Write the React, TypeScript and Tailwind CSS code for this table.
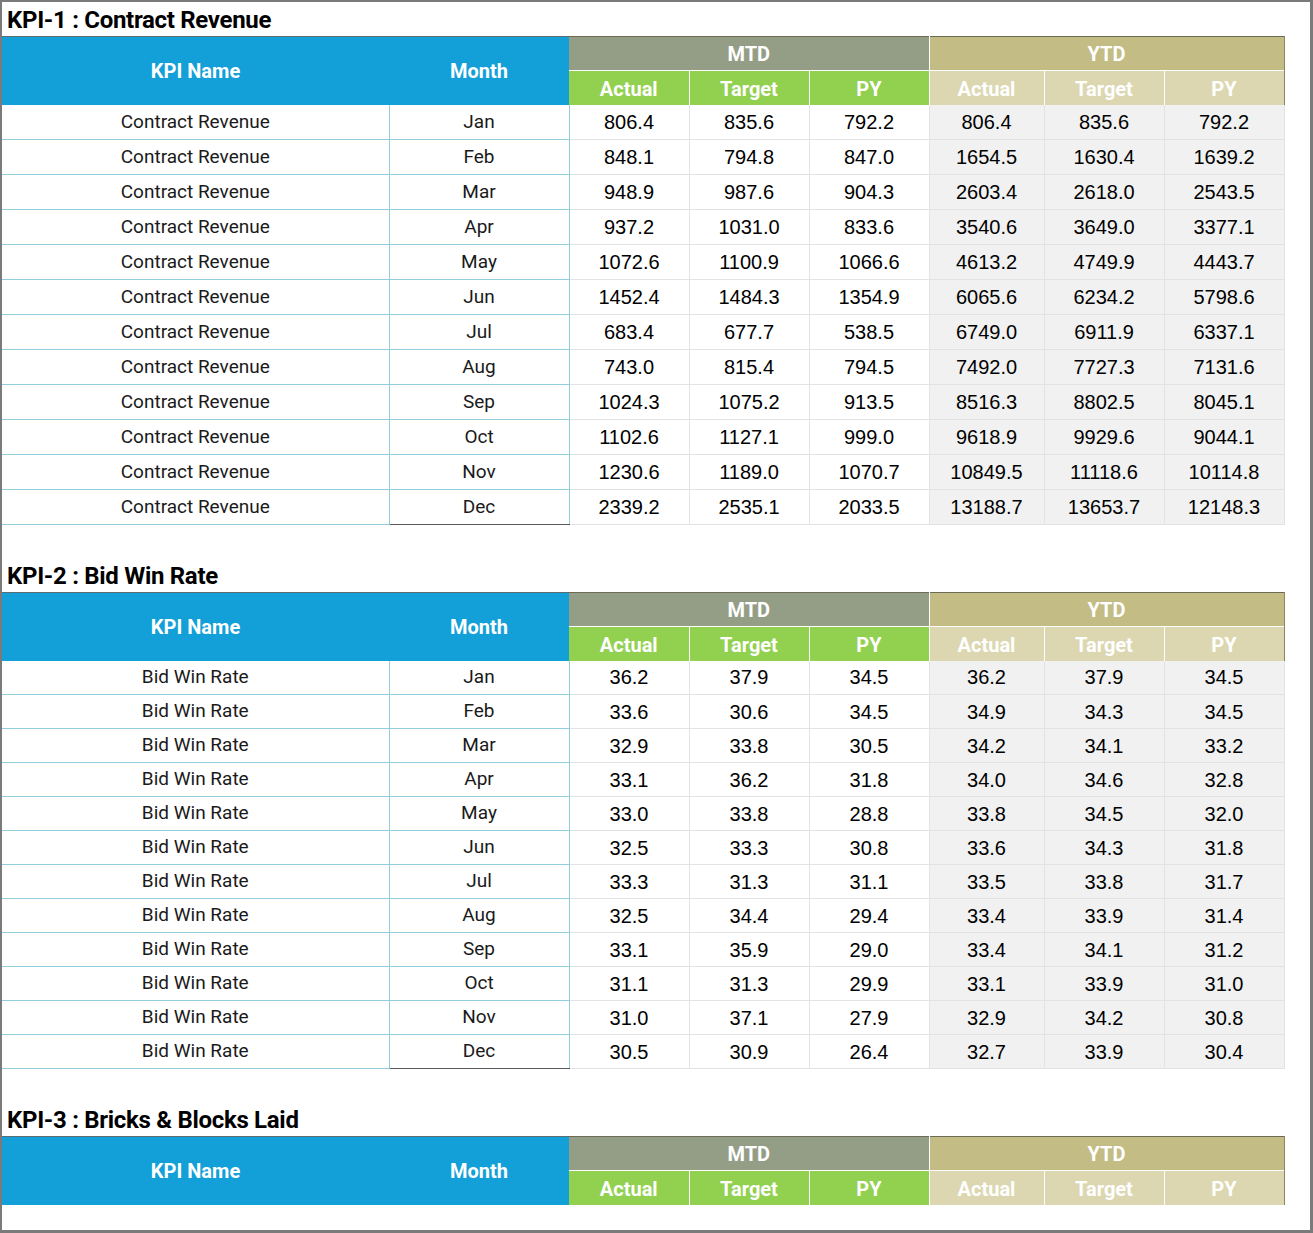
import React from "react";

type Row = [string, string, string, string, string, string, string];

const kpi1: Row[] = [
  ["Jan", "806.4", "835.6", "792.2", "806.4", "835.6", "792.2"],
  ["Feb", "848.1", "794.8", "847.0", "1654.5", "1630.4", "1639.2"],
  ["Mar", "948.9", "987.6", "904.3", "2603.4", "2618.0", "2543.5"],
  ["Apr", "937.2", "1031.0", "833.6", "3540.6", "3649.0", "3377.1"],
  ["May", "1072.6", "1100.9", "1066.6", "4613.2", "4749.9", "4443.7"],
  ["Jun", "1452.4", "1484.3", "1354.9", "6065.6", "6234.2", "5798.6"],
  ["Jul", "683.4", "677.7", "538.5", "6749.0", "6911.9", "6337.1"],
  ["Aug", "743.0", "815.4", "794.5", "7492.0", "7727.3", "7131.6"],
  ["Sep", "1024.3", "1075.2", "913.5", "8516.3", "8802.5", "8045.1"],
  ["Oct", "1102.6", "1127.1", "999.0", "9618.9", "9929.6", "9044.1"],
  ["Nov", "1230.6", "1189.0", "1070.7", "10849.5", "11118.6", "10114.8"],
  ["Dec", "2339.2", "2535.1", "2033.5", "13188.7", "13653.7", "12148.3"],
];

const kpi2: Row[] = [
  ["Jan", "36.2", "37.9", "34.5", "36.2", "37.9", "34.5"],
  ["Feb", "33.6", "30.6", "34.5", "34.9", "34.3", "34.5"],
  ["Mar", "32.9", "33.8", "30.5", "34.2", "34.1", "33.2"],
  ["Apr", "33.1", "36.2", "31.8", "34.0", "34.6", "32.8"],
  ["May", "33.0", "33.8", "28.8", "33.8", "34.5", "32.0"],
  ["Jun", "32.5", "33.3", "30.8", "33.6", "34.3", "31.8"],
  ["Jul", "33.3", "31.3", "31.1", "33.5", "33.8", "31.7"],
  ["Aug", "32.5", "34.4", "29.4", "33.4", "33.9", "31.4"],
  ["Sep", "33.1", "35.9", "29.0", "33.4", "34.1", "31.2"],
  ["Oct", "31.1", "31.3", "29.9", "33.1", "33.9", "31.0"],
  ["Nov", "31.0", "37.1", "27.9", "32.9", "34.2", "30.8"],
  ["Dec", "30.5", "30.9", "26.4", "32.7", "33.9", "30.4"],
];

function Title({ text }: { text: string }) {
  return (
    <div className="h-[34px] flex items-center pl-[5px] pt-[2px] text-[24px] font-bold text-black leading-none tracking-[-0.3px]">
      {text}
    </div>
  );
}

function KpiTable({ name, rows, rowH }: { name: string; rows: Row[]; rowH: "a" | "b" }) {
  const trH = rowH === "a" ? "h-[35px]" : "h-[34px]";
  return (
    <table className="table-fixed border-collapse w-[1282px]">
      <colgroup>
        <col className="w-[387px]" />
        <col className="w-[180px]" />
        <col className="w-[120px]" />
        <col className="w-[120px]" />
        <col className="w-[120px]" />
        <col className="w-[115px]" />
        <col className="w-[120px]" />
        <col className="w-[120px]" />
      </colgroup>
      <thead>
        <tr className="h-[34px]">
          <th rowSpan={2} className="bg-[#139fd7] text-white text-[20px] font-bold border-t border-[#5f6b6f] p-0">
            KPI Name
          </th>
          <th rowSpan={2} className="bg-[#139fd7] text-white text-[20px] font-bold border-t border-[#5f6b6f] p-0">
            Month
          </th>
          <th colSpan={3} className="bg-[#949e87] text-white text-[20px] font-bold border-t border-t-[#6b6b55] border-r border-r-white p-0">
            MTD
          </th>
          <th colSpan={3} className="bg-[#c3bc84] text-white text-[20px] font-bold border-t border-t-[#6b6b55] border-r border-r-[#8c8660] p-0">
            YTD
          </th>
        </tr>
        <tr className="h-[34px]">
          {["Actual", "Target", "PY"].map((t) => (
            <th key={"m" + t} className="bg-[#92d050] text-white text-[20px] font-bold border-t border-r border-white p-0 pt-[3px]">
              {t}
            </th>
          ))}
          {["Actual", "Target", "PY"].map((t, i) => (
            <th
              key={"y" + t}
              className={
                "bg-[#dcd7b1] text-white text-[20px] font-bold border-t border-t-white p-0 pt-[3px] border-r " +
                (i === 2 ? "border-r-[#8c8660]" : "border-r-white")
              }
            >
              {t}
            </th>
          ))}
        </tr>
      </thead>
      {rows.length > 0 && (
        <tbody>
          {rows.map((r, idx) => {
            const last = idx === rows.length - 1;
            return (
              <tr key={r[0]} className={trH}>
                <td className="p-0 text-center text-[19px] text-[#1a1a1a] border-b border-r border-[#92cddc]">
                  {name}
                </td>
                <td
                  className={
                    "p-0 text-center text-[19px] text-[#1a1a1a] border-r border-[#92cddc] border-b " +
                    (last ? "border-b-[#5a5a5a]" : "border-b-[#92cddc]")
                  }
                >
                  {r[0]}
                </td>
                {r.slice(1).map((v, i) => (
                  <td
                    key={i}
                    className={
                      "p-0 text-center text-[20px] text-black font-['Liberation_Sans',Arial,sans-serif] border-b border-r border-[#e3e3e3] " +
                      (i >= 3 ? "bg-[#f1f1f1]" : "bg-white")
                    }
                  >
                    {v}
                  </td>
                ))}
              </tr>
            );
          })}
        </tbody>
      )}
    </table>
  );
}

export default function App() {
  return (
    <div className="w-[1313px] h-[1233px] bg-white border-l-2 border-t-2 border-r-[3px] border-b-[3px] border-[#7a7a7a] overflow-hidden font-['Roboto','Noto_Sans',sans-serif]">
      <Title text="KPI-1 : Contract Revenue" />
      <KpiTable name="Contract Revenue" rows={kpi1} rowH="a" />
      <div className="h-[33px]" />
      <Title text="KPI-2 : Bid Win Rate" />
      <KpiTable name="Bid Win Rate" rows={kpi2} rowH="b" />
      <div className="h-[33px]" />
      <Title text="KPI-3 : Bricks & Blocks Laid" />
      <KpiTable name="Bricks & Blocks Laid" rows={[]} rowH="b" />
    </div>
  );
}
